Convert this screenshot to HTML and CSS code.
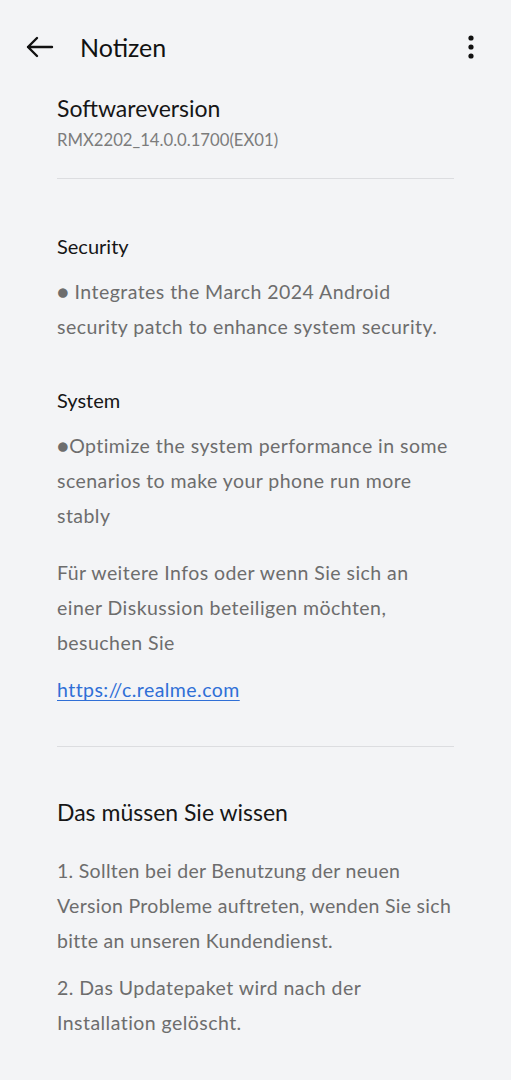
FILE: index.html
```html
<!DOCTYPE html>
<html lang="de">
<head>
<meta charset="utf-8">
<title>Notizen</title>
<link rel="stylesheet" href="styles.css">
</head>
<body>
<header class="appbar">
  <svg class="icon back" width="28" height="24" viewBox="0 0 28 24" aria-hidden="true">
    <path d="M2 12 H26 M11 3 L2 12 L11 21" fill="none" stroke="#111" stroke-width="2.4" stroke-linecap="round" stroke-linejoin="round"/>
  </svg>
  <h1 class="title">Notizen</h1>
  <svg class="icon more" width="8" height="26" viewBox="0 0 8 26" aria-hidden="true">
    <circle cx="4" cy="4" r="2.6" fill="#111"/>
    <circle cx="4" cy="13" r="2.6" fill="#111"/>
    <circle cx="4" cy="22" r="2.6" fill="#111"/>
  </svg>
</header>
<main class="content">
  <section class="version">
    <h2 class="heading">Softwareversion</h2>
    <p class="version-code">RMX2202_14.0.0.1700(EX01)</p>
  </section>
  <hr class="divider">
  <section class="notes">
    <h3 class="sub">Security</h3>
    <p class="body">● Integrates the March 2024 Android security patch to enhance system security.</p>
    <h3 class="sub sub-gap">System</h3>
    <p class="body">●Optimize the system performance in some scenarios to make your phone run more stably</p>
    <p class="body para">Für weitere Infos oder wenn Sie sich an einer Diskussion beteiligen möchten, besuchen Sie</p>
    <p class="body link-row"><a class="link" href="#">https://c.realme.com</a></p>
  </section>
  <hr class="divider divider-2">
  <section class="notice">
    <h2 class="heading">Das müssen Sie wissen</h2>
    <p class="body item">1. Sollten bei der Benutzung der neuen Version Probleme auftreten, wenden Sie sich bitte an unseren Kundendienst.</p>
    <p class="body item2">2. Das Updatepaket wird nach der Installation gelöscht.</p>
  </section>
</main>
</body>
</html>
```
FILE: styles.css
```css
* { box-sizing: border-box; }
html, body { margin: 0; padding: 0; }
body {
  background: #f3f4f6;
  font-family: "Lato", "Noto Sans", sans-serif;
  color: #161616;
  width: 511px;
  height: 1080px;
  overflow: hidden;
}
.appbar {
  display: flex;
  align-items: center;
  height: 94px;
  padding: 0 36px 0 26px;
}
.back { flex: none; }
.title {
  flex: 1;
  margin: 0 0 0 26px;
  font-size: 25px;
  font-weight: 400;
  color: #111;
}
.more { flex: none; }
.content {
  padding: 0 57px;
}
.heading {
  margin: 0;
  font-size: 23px;
  font-weight: 400;
  line-height: 28px;
  color: #161616;
}
.version-code {
  margin: 6px 0 0;
  font-size: 16.7px;
  line-height: 24px;
  color: #7c7c7c;
}
.divider {
  border: 0;
  border-top: 1px solid #dcdde0;
  margin: 26px 0 0;
}
.notes { padding-top: 54px; }
.sub {
  margin: 0;
  font-size: 20px;
  font-weight: 400;
  line-height: 26px;
  color: #161616;
}
.sub-gap { margin-top: 43px; }
.body {
  margin: 0;
  font-size: 19.5px;
  line-height: 35px;
  letter-spacing: 0.45px;
  color: #6d6d6d;
}
.sub + .body { margin-top: 15px; }
.para { margin-top: 22px; }
.link-row { margin-top: 12px; }
.link { color: #2f6fd6; text-decoration: underline; text-underline-offset: 3px; }
.divider-2 { margin-top: 39px; }
.notice { padding-top: 51px; }
.item { margin-top: 27px; letter-spacing: 0.3px; }
.item2 { margin-top: 12px; }
```
